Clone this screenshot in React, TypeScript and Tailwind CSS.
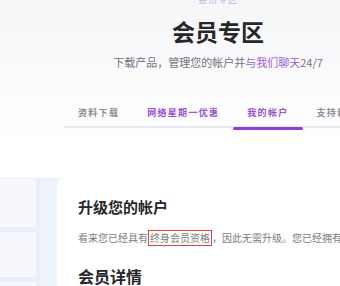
import React from "react";

export default function App() {
  const font = { fontFamily: '"Noto Sans CJK SC", "Noto Sans", sans-serif' };
  return (
    <div className="w-[340px] h-[286px] overflow-hidden bg-gradient-to-b from-[#f6f6f9] via-white to-white" style={font}>
      <div className="w-[436px] flex flex-col">
        <div className="h-[4px] overflow-hidden flex justify-center">
          <span className="text-[9px] leading-[9px] -mt-[5px] text-[#c4b5ea] tracking-[1px]">会员专区</span>
        </div>
        <h1 className="mt-[12px] text-center text-[23px] leading-[30px] font-bold text-[#26272b]">会员专区</h1>
        <p className="mt-[8px] text-center text-[11px] leading-[16px] text-[#70747c]">
          下载产品，管理您的帐户并<span className="text-[#9a5ad6]">与我们聊天</span>24/7
        </p>
        <div className="mt-[28px] ml-[64px] flex border-b-2 border-[#e6e7ea] h-[30px]">
          <div className="px-[14px] h-[30px] flex items-center text-[9px] font-bold tracking-[1.3px] text-[#8a8d93]">资料下载</div>
          <div className="px-[14px] h-[30px] flex items-center text-[9px] font-bold tracking-[1.3px] text-[#9a4fd8]">网络星期一优惠</div>
          <div className="relative px-[14px] h-[30px] flex items-center text-[9px] font-bold tracking-[1.3px] text-[#9a4fd8]">
            我的帐户
            <div className="absolute left-0 right-0 -bottom-[2px] h-[3px] rounded-full bg-[#8d3fd6]" />
          </div>
          <div className="px-[14px] h-[30px] flex items-center text-[9px] font-bold tracking-[1.3px] text-[#8a8d93] whitespace-nowrap">支持和常见问题</div>
        </div>
        <div className="mt-[50px] flex bg-gradient-to-r from-[#eef2fb] to-[#f6f8fd]">
          <div className="w-[40px] shrink-0 bg-[#e9eefb] flex flex-col gap-[5px] pt-[1px]">
            <div className="h-[48px] w-[36px] bg-[#f6f8fe]" />
            <div className="h-[45px] w-[36px] bg-[#f6f8fe]" />
            <div className="h-[45px] w-[36px] bg-[#f6f8fe]" />
          </div>
          <div className="w-[17px] shrink-0" />
          <div className="flex-1 bg-white rounded-tl-[8px] pl-[21px] pt-[18px] h-[120px]">
            <h2 className="text-[15px] leading-[22px] font-bold text-[#26272b]">升级您的帐户</h2>
            <p className="mt-[12px] text-[10px] leading-[16px] text-[#7a7d84] whitespace-nowrap">
              看来您已经具有<span className="inline-block border-[1.5px] border-[#e0443c] px-[1px] leading-[14px]">终身会员资格</span>，因此无需升级。您已经拥有所有产品的访问权限。
            </p>
            <h2 className="mt-[19px] text-[16px] leading-[22px] font-bold text-[#26272b]">会员详情</h2>
          </div>
        </div>
      </div>
    </div>
  );
}
